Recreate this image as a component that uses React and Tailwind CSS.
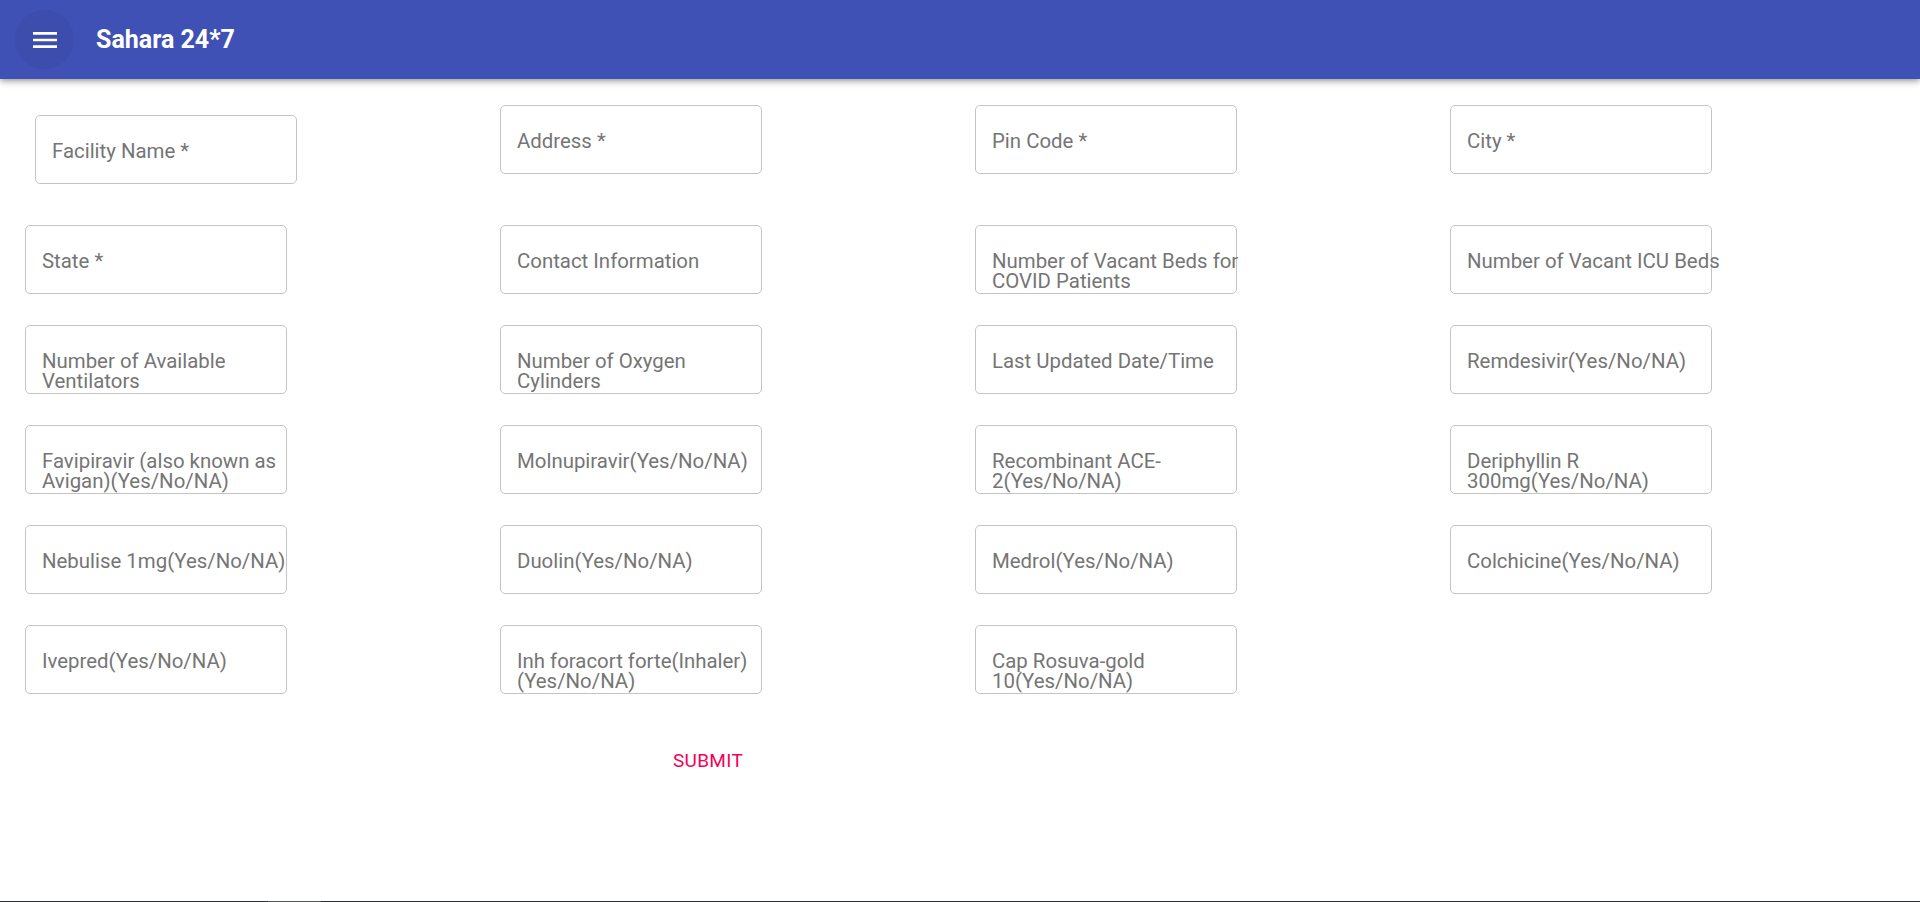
const fields = [
  "Facility Name *",
  "Address *",
  "Pin Code *",
  "City *",
  "State *",
  "Contact Information",
  "Number of Vacant Beds for COVID Patients",
  "Number of Vacant ICU Beds",
  "Number of Available Ventilators",
  "Number of Oxygen Cylinders",
  "Last Updated Date/Time",
  "Remdesivir(Yes/No/NA)",
  "Favipiravir (also known as Avigan)(Yes/No/NA)",
  "Molnupiravir(Yes/No/NA)",
  "Recombinant ACE-2(Yes/No/NA)",
  "Deriphyllin R 300mg(Yes/No/NA)",
  "Nebulise 1mg(Yes/No/NA)",
  "Duolin(Yes/No/NA)",
  "Medrol(Yes/No/NA)",
  "Colchicine(Yes/No/NA)",
  "Ivepred(Yes/No/NA)",
  "Inh foracort forte(Inhaler)(Yes/No/NA)",
  "Cap Rosuva-gold 10(Yes/No/NA)",
];

const Field = ({ label, className = "" }) => (
  <div
    className={`relative h-[69px] w-[262px] rounded-[5px] border border-[#c4c4c4] ${className}`}
  >
    <label className="pointer-events-none absolute left-[16px] top-[24.5px] w-[256px] text-[20.4px] leading-[20px] text-[#757575]">
      {label}
    </label>
  </div>
);

const App = () => {
  return (
    <div className="flex min-h-screen flex-col bg-white font-['Roboto',sans-serif]">
      <header className="relative z-10 flex h-[79px] items-center bg-[#3f51b5] pl-[15px] shadow-[0px_2px_4px_-1px_rgba(0,0,0,0.2),0px_4px_5px_0px_rgba(0,0,0,0.14),0px_1px_10px_0px_rgba(0,0,0,0.12)]">
        <button className="flex h-[59px] w-[59px] items-center justify-center rounded-full bg-[#3c4dad]">
          <svg width="32" height="32" viewBox="0 0 24 24" fill="#ffffff">
            <path d="M3 18h18v-2H3v2zm0-5h18v-2H3v2zm0-7v2h18V6H3z" />
          </svg>
        </button>
        <h1 className="ml-[22px] text-[25px] font-bold text-white">Sahara 24*7</h1>
      </header>

      <form className="pl-[25px] pt-[26px]">
        <div className="grid grid-cols-[repeat(4,475px)] gap-y-[31px]">
          {fields.map((f, i) => (
            <Field
              key={f}
              label={f}
              className={i === 0 ? "my-[10px] ml-[10px]" : ""}
            />
          ))}
        </div>
        <div className="mt-[55px] pl-[638px]">
          <button
            type="submit"
            className="px-[10px] text-[19px] font-normal uppercase leading-[24px] tracking-[0.3px] text-[#f50057]"
          >
            Submit
          </button>
        </div>
      </form>

      <div className="mt-auto flex h-px">
        <div className="w-[268px] bg-[#2e2f33]" />
        <div className="w-[53px] bg-[#55565a]" />
        <div className="flex-1 bg-[#2e2f33]" />
      </div>
    </div>
  );
};

export default App;
